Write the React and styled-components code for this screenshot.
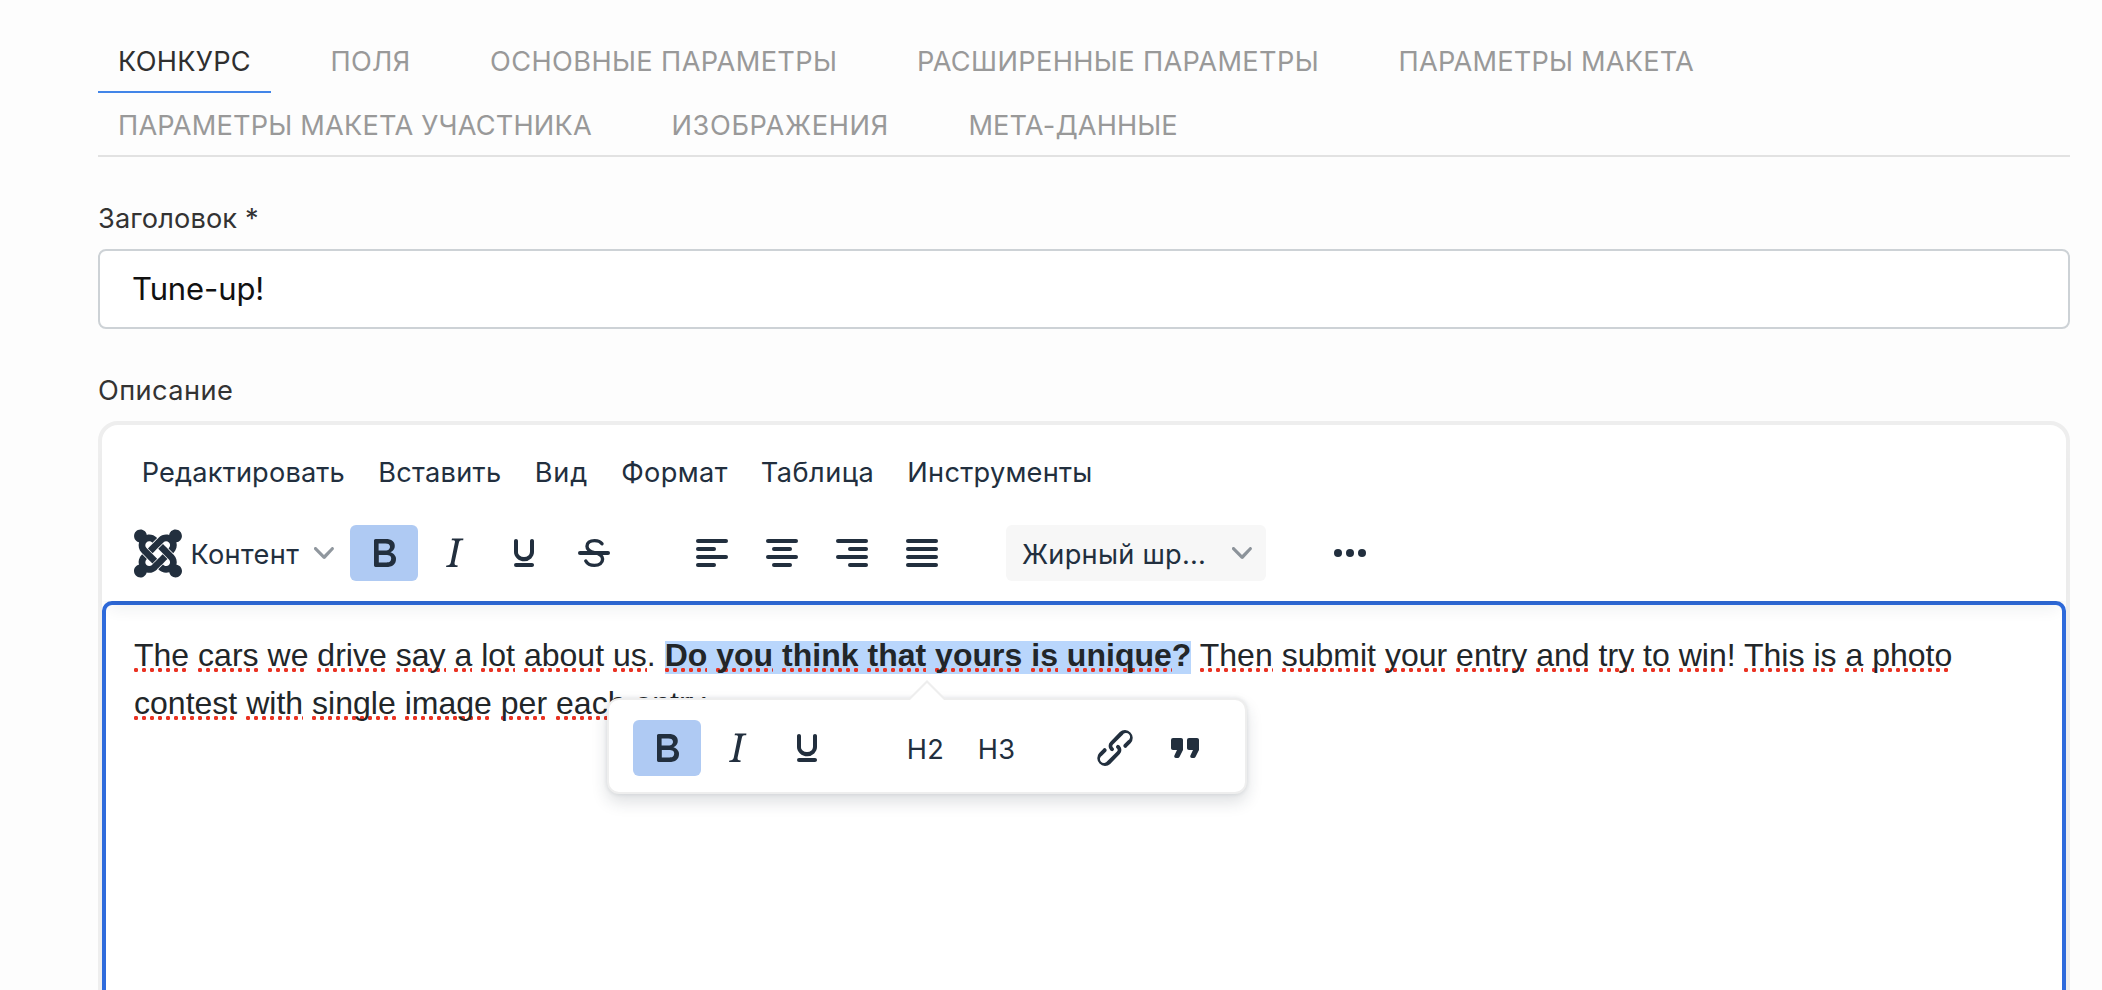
import React, { useState } from "react";
import styled, { createGlobalStyle } from "styled-components";
import { FaJoomla } from "react-icons/fa";

const GlobalStyle = createGlobalStyle`
  * {
    box-sizing: border-box;
  }
  body {
    margin: 0;
    background-color: #fdfdfd;
    font-family: Inter, "Open Sans", sans-serif;
    font-size: 27.2px;
    color: #333333;
    overflow: hidden;
  }
  button, input {
    font: inherit;
    color: inherit;
    border: none;
    background: none;
    padding: 0;
    margin: 0;
    outline: none;
  }
`;

const Page = styled.main`
  height: 990px;
  overflow: hidden;
  padding: 29px 32px 0 98px;
`;

const Tabs = styled.nav`
  display: flex;
  flex-wrap: wrap;
  column-gap: 39.5px;
  padding-right: 180px;
  margin-bottom: 42px;
  box-shadow: inset 0 -2px #e2e2e2;
`;

const Tab = styled.button`
  height: 64px;
  padding: 2px 20px 0;
  border-bottom: 2px solid ${(props) => (props.$active ? "#4285e8" : "transparent")};
  color: ${(props) => (props.$active ? "#2f2f2f" : "#999999")};
  letter-spacing: ${(props) => props.$tracking}px;
  white-space: nowrap;
  cursor: pointer;
`;

const Field = styled.div`
  display: flex;
  flex-direction: column;
  margin-bottom: 42px;
`;

const Label = styled.label`
  line-height: 40px;
  margin-bottom: 10px;
  letter-spacing: ${(props) => props.$tracking}px;
`;

const TextInput = styled.input`
  height: 80px;
  padding: 0 32px 1px;
  border: 2px solid #cdd2d6;
  border-radius: 8px;
  background-color: #ffffff;
  font-size: 31px;
  letter-spacing: -0.1px;
  color: #111111;
`;

const Editor = styled.section`
  display: flex;
  flex-direction: column;
  height: 700px;
  border: 4px solid #eeeeee;
  border-radius: 20px;
  background-color: #ffffff;
  color: #222f3e;
`;

const EditorHeader = styled.header`
  position: relative;
  z-index: 1;
  padding: 19px 0 20px;
  border-radius: 16px 16px 0 0;
  box-shadow: 0 4px 4px -4px rgba(34, 47, 62, 0.1),
    0 16px 16px -8px rgba(34, 47, 62, 0.07);
`;

const MenuBar = styled.div`
  display: flex;
  align-items: center;
  gap: 33.2px;
  height: 56px;
  padding-left: 39.7px;
  margin-bottom: 25px;
`;

const MenuItem = styled.button`
  letter-spacing: ${(props) => props.$tracking}px;
`;

const Toolbar = styled.div`
  display: flex;
  gap: 50px;
  padding-left: 32px;
`;

const ToolGroup = styled.div`
  display: flex;
  gap: 2px;
`;

const ToolButton = styled.button`
  display: flex;
  align-items: center;
  justify-content: center;
  width: 68px;
  height: 56px;
  border-radius: 6px;
  background-color: ${(props) => (props.$active ? "#afcaf3" : "transparent")};
  cursor: pointer;
`;

const HeadingButton = styled(ToolButton)`
  width: 69px;
  padding-top: 2px;
  letter-spacing: 0.3px;
`;

const ContentButton = styled.button`
  display: flex;
  align-items: center;
  width: 214px;
  height: 56px;
`;

const JoomlaLogo = styled(FaJoomla)`
  flex: none;
  width: 48px;
  height: 55px;
`;

const ContentLabel = styled.span`
  margin: 2px 15px 0 8.4px;
  letter-spacing: 0.35px;
`;

const FormatSelect = styled.button`
  display: flex;
  align-items: center;
  justify-content: space-between;
  width: 260px;
  height: 56px;
  padding: 0 14px 0 16px;
  border-radius: 6px;
  background-color: #f7f7f7;
`;

const SelectLabel = styled.span`
  padding-top: 2px;
  letter-spacing: 0.25px;
`;

const EditArea = styled.div`
  position: relative;
  flex: 1;
  padding: 26px 28px;
  border: 4px solid #2f6bdc;
  border-radius: 10px;
`;

const Paragraph = styled.p`
  margin: 0;
  font-family: "Liberation Sans", Arial, sans-serif;
  font-size: 32px;
  line-height: 48px;
  letter-spacing: 0.015px;
  color: #222629;
`;

// dotted spelling mark under one word
const Word = styled.span`
  background: radial-gradient(circle at 2px 2px, #ea3323 1.9px, transparent 2.5px) 0 31px / 8px 4px
    repeat-x;
`;

const Selected = styled.strong`
  padding-bottom: 1px;
  background: linear-gradient(#b9d6fc, #b9d6fc) 0 4px no-repeat;
`;

const Popup = styled.div`
  position: absolute;
  top: 93px;
  left: 501px;
  display: flex;
  gap: 50px;
  width: 640px;
  height: 96px;
  padding: 20px 22px 16px 24px;
  border: 2px solid #eeeeee;
  border-radius: 12px;
  background-color: #ffffff;
  box-shadow: 0 0 4px rgba(34, 47, 62, 0.12), 0 8px 16px rgba(34, 47, 62, 0.15);

  &::before,
  &::after {
    content: "";
    position: absolute;
    left: 318px;
    transform: translateX(-50%);
    border: solid transparent;
    border-top: none;
  }
  &::before {
    top: -20px;
    border-width: 0 18px 18px;
    border-bottom-color: #eeeeee;
  }
  &::after {
    top: -17px;
    border-width: 0 17px 17px;
    border-bottom-color: #ffffff;
  }
`;

const Icon = ({ children }) => (
  <svg width="48" height="48" viewBox="0 0 24 24" fill="#222f3e">
    {children}
  </svg>
);

const Chevron = () => (
  <svg width="20" height="20" viewBox="0 0 10 10" fill="#222f3e" fillOpacity="0.5">
    <path d="M8.7 2.2c.3-.3.8-.3 1 0 .4.4.4.9 0 1.2L5.7 7.8c-.3.3-.9.3-1.2 0L.2 3.4a.8.8 0 0 1 0-1.2c.3-.3.8-.3 1.1 0L5 6l3.7-3.8Z" />
  </svg>
);

const BoldIcon = () => (
  <Icon>
    <path
      fillRule="evenodd"
      d="M7.8 19c-.3 0-.5 0-.6-.2l-.2-.5V5.7c0-.2 0-.4.2-.5l.6-.2h5c1.5 0 2.7.3 3.5 1 .7.6 1.1 1.4 1.1 2.5a3 3 0 0 1-.6 1.9c-.4.6-1 1-1.6 1.2.4.1.9.3 1.3.6s.8.7 1 1.2c.4.4.5 1 .5 1.6 0 1.3-.4 2.3-1.3 3-.8.7-2.1 1-3.8 1H7.8Zm5-8.3c.6 0 1.2-.1 1.6-.5.4-.3.6-.7.6-1.3 0-1.1-.8-1.7-2.3-1.7H9.3v3.5h3.4Zm.5 6c.7 0 1.3-.1 1.7-.4.4-.4.6-.9.6-1.5s-.2-1-.7-1.4c-.4-.3-1-.4-2-.4H9.4v3.8h4Z"
    />
  </Icon>
);

const ItalicIcon = () => (
  <Icon>
    <path d="m16.7 4.7-.1.9h-.3c-.6 0-1 0-1.4.3-.3.3-.4.6-.5 1.1l-2.1 9.8v.6c0 .5.4.8 1.4.8h.2l-.2.8H8l.2-.8h.2c1.1 0 1.8-.5 2-1.5l2-9.8.1-.5c0-.6-.4-.8-1.4-.8h-.3l.2-.9h5.8Z" />
  </Icon>
);

const UnderlineIcon = () => (
  <Icon>
    <path d="M16 5c.6 0 1 .4 1 1v5.5a4 4 0 0 1-.4 1.8l-1 1.4a5.3 5.3 0 0 1-5.5 1 5 5 0 0 1-1.6-1c-.5-.4-.8-.9-1.1-1.4a4 4 0 0 1-.4-1.8V6c0-.6.4-1 1-1s1 .4 1 1v5.5c0 .3 0 .6.2 1l.6.7a3.3 3.3 0 0 0 2.2.8 3.4 3.4 0 0 0 2.2-.8c.3-.2.4-.5.6-.8l.2-.9V6c0-.6.4-1 1-1ZM8 17h8c.6 0 1 .4 1 1s-.4 1-1 1H8a1 1 0 0 1 0-2Z" />
  </Icon>
);

const StrikeIcon = () => (
  <Icon>
    <rect x="4" y="11" width="16" height="2" rx="1" />
    <path
      d="M16 7.4C15.3 6.4 14 5.8 12.3 5.8c-2.4 0-3.8 1.2-3.8 2.8 0 1.7 1.3 2.6 3.7 3.2 2.7.6 4.1 1.5 4.1 3.2 0 2-1.6 3.2-4.1 3.2-2 0-3.5-.7-4.3-2.2"
      fill="none"
      stroke="#222f3e"
      strokeWidth="1.7"
      strokeLinecap="round"
    />
  </Icon>
);

const shortLineX = { left: 4, center: 7, right: 10, justify: 4 };

const AlignIcon = ({ side }) => {
  const short = { x: shortLineX[side], width: side === "justify" ? 16 : 10 };
  return (
    <Icon>
      <rect x="4" y="5" width="16" height="2" rx="1" />
      <rect {...short} y="9" height="2" rx="1" />
      <rect x="4" y="13" width="16" height="2" rx="1" />
      <rect {...short} y="17" height="2" rx="1" />
    </Icon>
  );
};

const MoreIcon = () => (
  <Icon>
    <circle cx="6" cy="12" r="2" />
    <circle cx="12" cy="12" r="2" />
    <circle cx="18" cy="12" r="2" />
  </Icon>
);

const LinkIcon = () => (
  <Icon>
    <path d="M6.2 12.3a1 1 0 0 1 1.4 1.4l-2 2a2 2 0 1 0 2.6 2.8l4.8-4.8a1 1 0 0 0 0-1.4 1 1 0 1 1 1.4-1.3 2.9 2.9 0 0 1 0 4L9.6 20a3.9 3.9 0 0 1-5.5-5.5l2-2Zm11.6-.6a1 1 0 0 1-1.4-1.4l2-2a2 2 0 1 0-2.6-2.8L11 10.3a1 1 0 0 0 0 1.4A1 1 0 1 1 9.6 13a2.9 2.9 0 0 1 0-4L14.4 4a3.9 3.9 0 0 1 5.5 5.5l-2 2Z" />
  </Icon>
);

const QuoteIcon = () => (
  <Icon>
    <path d="M7.5 17h.9c.4 0 .7-.2.9-.6L11 13V8c0-.6-.4-1-1-1H6a1 1 0 0 0-1 1v4c0 .6.4 1 1 1h2l-1.3 2.7a1 1 0 0 0 .8 1.3Zm8 0h.9c.4 0 .7-.2.9-.6L19 13V8c0-.6-.4-1-1-1h-4a1 1 0 0 0-1 1v4c0 .6.4 1 1 1h2l-1.3 2.7a1 1 0 0 0 .8 1.3Z" />
  </Icon>
);

const tabs = [
  { title: "КОНКУРС", tracking: 0.3 },
  { title: "ПОЛЯ", tracking: 0.3 },
  { title: "ОСНОВНЫЕ ПАРАМЕТРЫ", tracking: 0.38 },
  { title: "РАСШИРЕННЫЕ ПАРАМЕТРЫ", tracking: 0.36 },
  { title: "ПАРАМЕТРЫ МАКЕТА", tracking: 0.19 },
  { title: "ПАРАМЕТРЫ МАКЕТА УЧАСТНИКА", tracking: 0.18 },
  { title: "ИЗОБРАЖЕНИЯ", tracking: 0.65 },
  { title: "МЕТА-ДАННЫЕ", tracking: 0.1 },
];

const menu = [
  { title: "Редактировать", tracking: 0.16 },
  { title: "Вставить", tracking: 0.3 },
  { title: "Вид", tracking: 0.8 },
  { title: "Формат", tracking: 0.35 },
  { title: "Таблица", tracking: 0.45 },
  { title: "Инструменты", tracking: 0.25 },
];

// wraps every word in a spelling mark, punctuation and spaces stay plain
function Spelled({ text }) {
  return text
    .split(/([A-Za-z]+)/)
    .map((part, i) => (i % 2 ? <Word key={i}>{part}</Word> : part));
}

export default function App() {
  const [activeTab, setActiveTab] = useState("КОНКУРС");
  const [title, setTitle] = useState("Tune-up!");

  return (
    <>
      <GlobalStyle />
      <Page>
        <Tabs>
          {tabs.map((tab) => (
            <Tab
              key={tab.title}
              $active={tab.title === activeTab}
              $tracking={tab.tracking}
              onClick={() => setActiveTab(tab.title)}
            >
              {tab.title}
            </Tab>
          ))}
        </Tabs>

        <Field>
          <Label htmlFor="title" $tracking={0.12}>
            Заголовок *
          </Label>
          <TextInput
            id="title"
            value={title}
            onChange={(e) => setTitle(e.target.value)}
          />
        </Field>

        <Field>
          <Label $tracking={0.42}>Описание</Label>
          <Editor>
            <EditorHeader>
              <MenuBar>
                {menu.map((item) => (
                  <MenuItem key={item.title} $tracking={item.tracking}>
                    {item.title}
                  </MenuItem>
                ))}
              </MenuBar>
              <Toolbar>
                <ToolGroup>
                  <ContentButton>
                    <JoomlaLogo />
                    <ContentLabel>Контент</ContentLabel>
                    <Chevron />
                  </ContentButton>
                  <ToolButton $active>
                    <BoldIcon />
                  </ToolButton>
                  <ToolButton>
                    <ItalicIcon />
                  </ToolButton>
                  <ToolButton>
                    <UnderlineIcon />
                  </ToolButton>
                  <ToolButton>
                    <StrikeIcon />
                  </ToolButton>
                </ToolGroup>
                <ToolGroup>
                  {Object.keys(shortLineX).map((side) => (
                    <ToolButton key={side}>
                      <AlignIcon side={side} />
                    </ToolButton>
                  ))}
                </ToolGroup>
                <FormatSelect>
                  <SelectLabel>Жирный шр...</SelectLabel>
                  <Chevron />
                </FormatSelect>
                <ToolButton>
                  <MoreIcon />
                </ToolButton>
              </Toolbar>
            </EditorHeader>

            <EditArea>
              <Paragraph>
                <Spelled text="The cars we drive say a lot about us. " />
                <Selected>
                  <Spelled text="Do you think that yours is unique?" />
                </Selected>
                <Spelled text=" Then submit your entry and try to win! This is a photo contest with single image per each entry." />
              </Paragraph>
              <Popup>
                <ToolGroup>
                  <ToolButton $active>
                    <BoldIcon />
                  </ToolButton>
                  <ToolButton>
                    <ItalicIcon />
                  </ToolButton>
                  <ToolButton>
                    <UnderlineIcon />
                  </ToolButton>
                </ToolGroup>
                <ToolGroup>
                  <HeadingButton>H2</HeadingButton>
                  <HeadingButton>H3</HeadingButton>
                </ToolGroup>
                <ToolGroup>
                  <ToolButton>
                    <LinkIcon />
                  </ToolButton>
                  <ToolButton>
                    <QuoteIcon />
                  </ToolButton>
                </ToolGroup>
              </Popup>
            </EditArea>
          </Editor>
        </Field>
      </Page>
    </>
  );
}
